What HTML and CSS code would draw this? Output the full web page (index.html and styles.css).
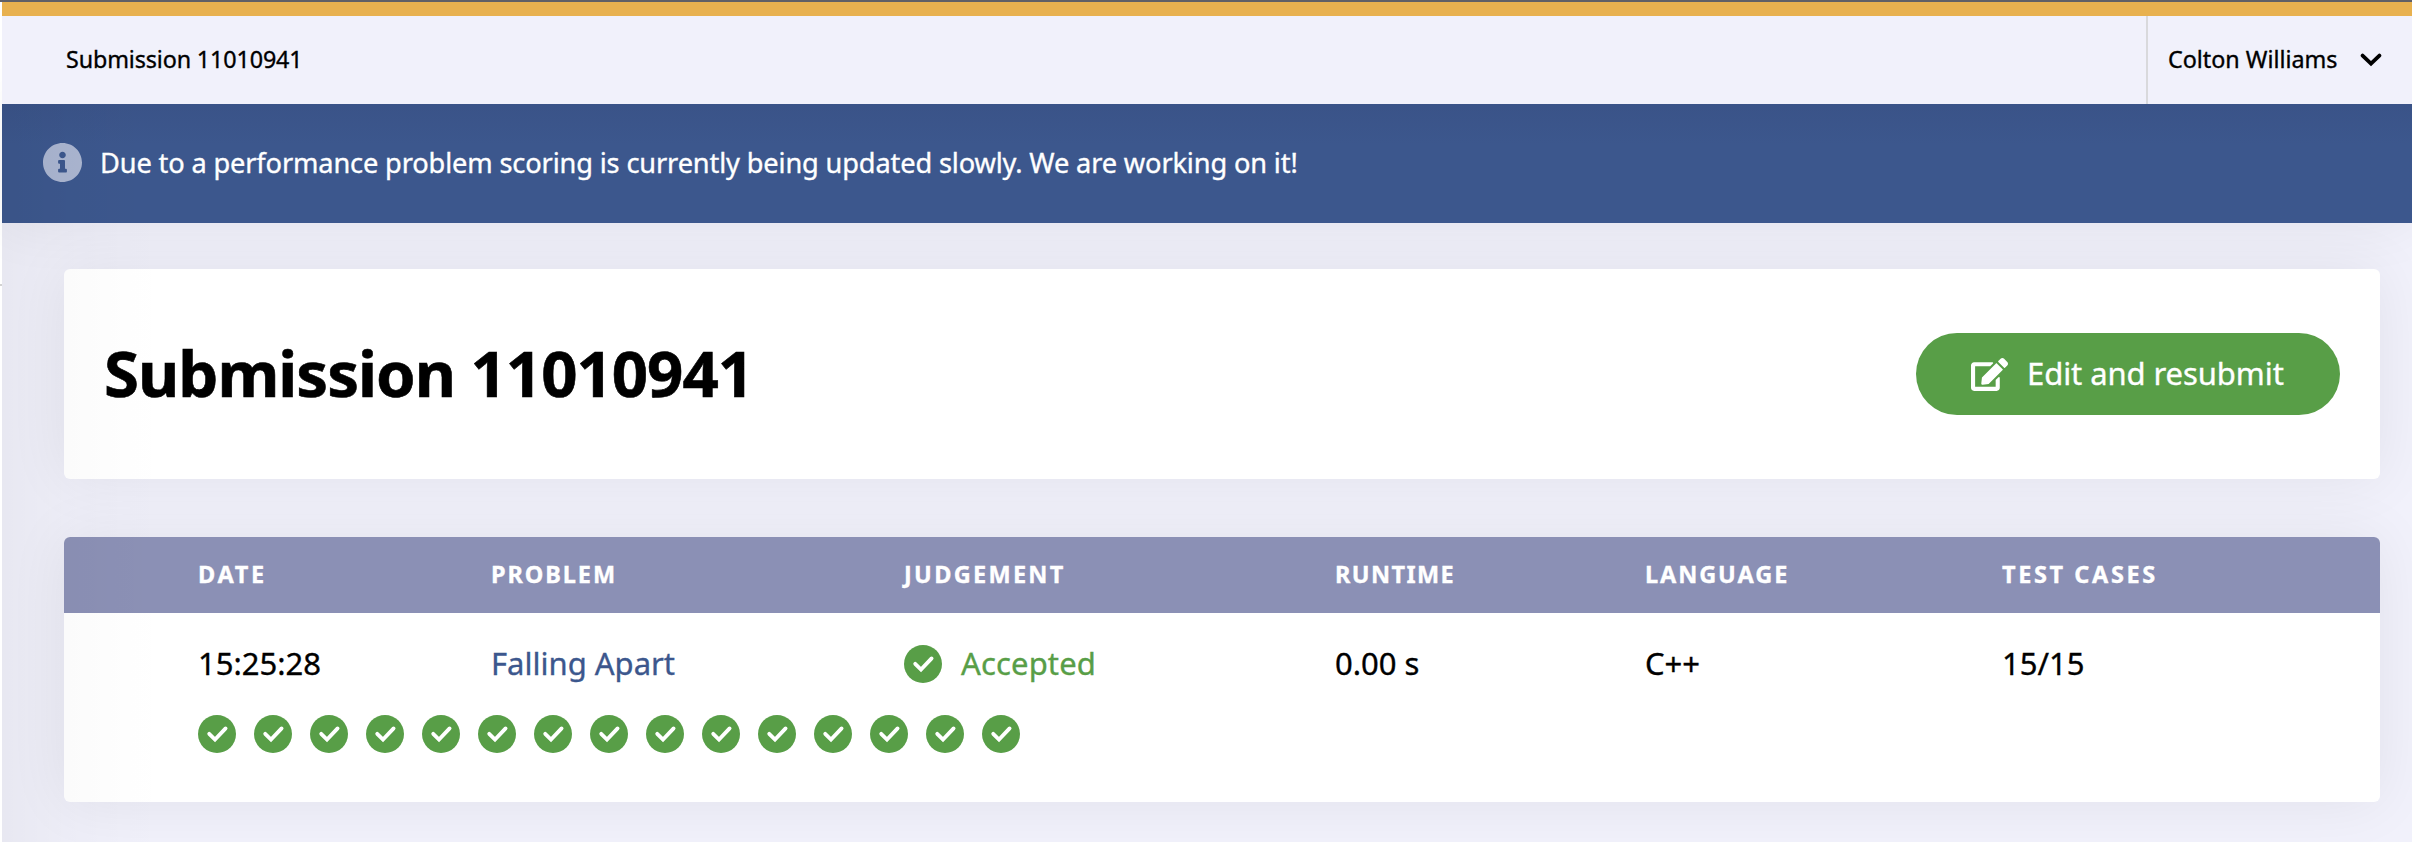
FILE: index.html
```html
<!DOCTYPE html>
<html lang="en">
<head>
<meta charset="utf-8">
<title>Submission 11010941</title>
<link rel="stylesheet" href="styles.css">
</head>
<body>
<svg class="defs" width="0" height="0">
  <symbol id="check" viewBox="0 0 38 38">
    <circle cx="19" cy="19" r="19" fill="#589e47"/>
    <path d="M11.200 18.800l5.800 5.800L27.600 13.400" fill="none" stroke="#fff" stroke-width="3.8" stroke-linecap="round"/>
  </symbol>
</svg>
<div class="page">
  <header class="topbar">
    <div class="crumb">Submission 11010941</div>
    <div class="user"><span class="username">Colton Williams</span>
      <svg class="chevron" width="22" height="14" viewBox="0 0 22 14"><path d="M2.6 2.6L11 10.6l8.400-8" fill="none" stroke="#000" stroke-width="3.800" stroke-linecap="round"/></svg>
    </div>
  </header>
  <div class="banner">
    <svg class="info" width="39" height="39" viewBox="8 8 496 496"><path fill="#aab5d0" d="M256 8C119 8 8 119 8 256s111 248 248 248 248-111 248-248S393 8 256 8zm0 110c23 0 42 19 42 42s-19 42-42 42-42-19-42-42 19-42 42-42zm56 254c0 7-5 12-12 12h-88c-7 0-12-5-12-12v-24c0-7 5-12 12-12h12v-64h-12c-7 0-12-5-12-12v-24c0-7 5-12 12-12h64c7 0 12 5 12 12v100h12c7 0 12 5 12 12v24z"/></svg>
    <span class="notice">Due to a performance problem scoring is currently being updated slowly. We are working on it!</span>
  </div>
  <main class="content">
    <section class="card title-card">
      <h1>Submission 11010941</h1>
      <a class="button">
        <svg width="37" height="33" viewBox="0 0 576 512"><path fill="#fff" d="M402.600 83.200l90.200 90.200c3.800 3.800 3.800 10 0 13.800L274.400 405.600l-92.800 10.300c-12.400 1.400-22.900-9.100-21.500-21.500l10.300-92.800L388.800 83.200c3.800-3.800 10-3.800 13.800 0zm162-22.900l-48.800-48.800c-15.200-15.200-39.900-15.200-55.200 0l-35.400 35.400c-3.800 3.800-3.800 10 0 13.800l90.200 90.200c3.800 3.800 10 3.800 13.800 0l35.400-35.400c15.200-15.300 15.200-40 0-55.200zM384 346.200V448H64V128h229.800c3.200 0 6.200-1.300 8.500-3.500l40-40c7.600-7.600 2.200-20.500-8.500-20.500H48C21.500 64 0 85.500 0 112v352c0 26.500 21.500 48 48 48h352c26.500 0 48-21.500 48-48V306.200c0-10.700-12.900-16-20.500-8.500l-40 40c-2.200 2.300-3.500 5.300-3.500 8.500z"/></svg>
        <span>Edit and resubmit</span>
      </a>
    </section>
    <section class="card table-card">
      <div class="row head">
        <div class="w-date">DATE</div><div>PROBLEM</div><div class="w-judge">JUDGEMENT</div><div class="w-run">RUNTIME</div><div>LANGUAGE</div><div class="w-cases">TEST CASES</div>
      </div>
      <div class="row data">
        <div>15:25:28</div><div class="link">Falling Apart</div><div class="accepted"><svg width="38" height="38"><use href="#check"/></svg><span>Accepted</span></div><div>0.00 s</div><div>C++</div><div>15/15</div>
      </div>
      <div class="cases">
        <svg><use href="#check"/></svg><svg><use href="#check"/></svg><svg><use href="#check"/></svg><svg><use href="#check"/></svg><svg><use href="#check"/></svg><svg><use href="#check"/></svg><svg><use href="#check"/></svg><svg><use href="#check"/></svg><svg><use href="#check"/></svg><svg><use href="#check"/></svg><svg><use href="#check"/></svg><svg><use href="#check"/></svg><svg><use href="#check"/></svg><svg><use href="#check"/></svg><svg><use href="#check"/></svg>
      </div>
    </section>
  </main>
  <div class="side-shade"></div>
  <div class="side-mark"></div>
</div>
</body>
</html>
```
FILE: styles.css
```css
* { box-sizing: border-box; }
html, body { height: 842px; overflow: hidden; }
body { margin: 0; background: #fff; font-family: "Noto Sans", "Open Sans", sans-serif; color: #000; -webkit-text-stroke: .35px; }
.defs { position: absolute; }
.page { position: relative; width: 2412px; height: 842px; overflow: hidden; border-top: 2px solid #606066; padding-left: 2px; display: flex; flex-direction: column; }
.topbar { position: relative; z-index: 3; height: 102px; flex: none; border-top: 14px solid #e8b14f; background: #f1f1fb; display: flex; justify-content: space-between; font-size: 23.3px; line-height: 32px; }
.crumb { padding: 27px 0 0 64px; letter-spacing: -.12px; white-space: nowrap; }
.user { width: 266px; border-left: 2px solid #d9d9dc; display: flex; padding: 27px 0 0 20px; }
.username { width: 192px; white-space: nowrap; }
.chevron { margin-top: 10px; }
.banner { position: relative; z-index: 1; height: 119px; flex: none; background: linear-gradient(#3a5388, #3c578d 40px); color: #fff; display: flex; align-items: center; padding-left: 41px; box-shadow: 0 0 60px rgba(0,0,0,.07); }
.info { margin-top: -3px; flex: none; }
.notice { font-size: 27.2px; letter-spacing: -.135px; margin-left: 18px; line-height: 38px; margin-top: -1px; white-space: nowrap; }
.content { flex: 1; background: #f1f1fb; padding: 46px 32px 0 62px; }
.card { background: #fff; border-radius: 6px; box-shadow: 0 0 60px rgba(0,0,0,.07); }
.title-card { height: 210px; padding: 0 40px; display: flex; align-items: center; justify-content: space-between; }
h1 { margin: -2px 0 0; font-size: 63.500px; line-height: 84px; letter-spacing: -1px; font-weight: 700; -webkit-text-stroke: .6px; }
.button { width: 424px; height: 82px; border-radius: 41px; background: #589e47; color: #fff; display: flex; align-items: center; padding-left: 55px; gap: 19px; font-size: 31px; line-height: 42px; letter-spacing: -.08px; white-space: nowrap; }
.button svg { flex: none; }
.button span { margin-top: -2px; }
.table-card { margin-top: 58px; height: 265px; overflow: hidden; }
.row { display: grid; grid-template-columns: 293px 413px 431px 310px 357px 1fr; padding-left: 134px; align-items: center; white-space: nowrap; }
.head { height: 76px; padding-bottom: 3px; background: #8b90b5; color: #fff; font-size: 23.500px; font-weight: 700; letter-spacing: 1.9px; line-height: 32px; }
.w-date { letter-spacing: 2.700px; }
.w-judge { letter-spacing: 2.3px; }
.w-run { letter-spacing: 1.4px; }
.w-cases { letter-spacing: 2.600px; }
.data { height: 102px; font-size: 31px; line-height: 40px; }
.data > div { margin-top: -2px; }
.data .accepted { margin-top: 0; }
.link { color: #3c578d; }
.accepted { color: #589e47; display: flex; align-items: center; gap: 19px; }
.accepted span { margin-top: -2px; letter-spacing: .15px; }
.cases { display: flex; gap: 18px; padding-left: 134px; }
.cases svg { width: 38px; height: 38px; flex: none; }
.side-shade { position: absolute; z-index: 2; left: 2px; top: 102px; bottom: 0; width: 170px; background: linear-gradient(90deg, rgba(0,0,0,.04), rgba(0,0,0,.016) 40%, rgba(0,0,0,.004) 75%, transparent); }
.side-mark { position: absolute; left: 0; top: 282px; width: 2px; height: 2px; background: #d2d2d2; }
```
